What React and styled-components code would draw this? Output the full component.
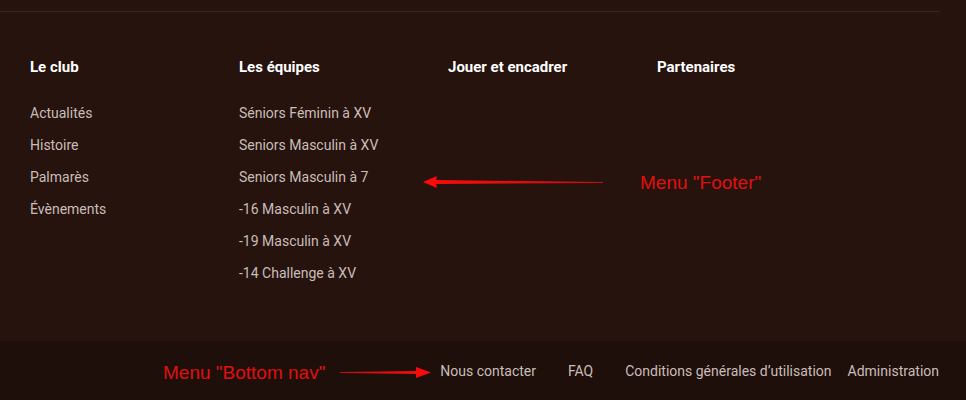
import React from 'react'
import styled, { createGlobalStyle } from 'styled-components'

const GlobalStyle = createGlobalStyle`
    html, body {
        margin: 0;
        padding: 0;
        background: #26130e;
    }
    body {
        font-family: Roboto, "Liberation Sans", sans-serif;
    }
`

const Page = styled.div`
    position: relative;
    width: 966px;
    height: 400px;
    background: #26130e;
    overflow: hidden;
`

const TopRule = styled.div`
    margin-top: 11px;
    width: 940px;
    height: 1px;
    background: #3a2520;
`

const Columns = styled.div`
    display: grid;
    grid-template-columns: repeat(4, 209px);
    padding: 47px 0 0 30px;
    height: 329px;
    box-sizing: border-box;
`

const Column = styled.div`
    display: flex;
    flex-direction: column;
`

const Heading = styled.h3`
    margin: 0 0 30px;
    font-size: 15px;
    line-height: 16px;
    font-weight: 700;
    color: #ffffff;
`

const LinkList = styled.ul`
    list-style: none;
    margin: 0;
    padding: 0;
    display: flex;
    flex-direction: column;
    gap: 16px;
`

const LinkItem = styled.li`
    font-size: 14px;
    line-height: 16px;
    color: #c9bdb9;
`

const BottomNav = styled.nav`
    height: 59px;
    background: #1f0f0b;
    display: flex;
    justify-content: flex-end;
    align-items: center;
    padding-right: 27px;
    gap: 32px;
    box-sizing: border-box;
`

const BottomLink = styled.span`
    font-size: 14px;
    color: #c9bdb9;
    margin-right: ${p => p.$tight ? '-16px' : '0'};
`

const Note = styled.div`
    position: absolute;
    left: ${p => p.$x}px;
    top: ${p => p.$y}px;
    font-family: "Liberation Sans", Arial, sans-serif;
    font-size: 19px;
    color: #e0100f;
    white-space: nowrap;
`

const Arrow = styled.svg`
    position: absolute;
    left: ${p => p.$x}px;
    top: ${p => p.$y}px;
`

const columns = [
    { title: 'Le club', links: ['Actualités', 'Histoire', 'Palmarès', 'Évènements'] },
    {
        title: 'Les équipes',
        links: [
            'Séniors Féminin à XV',
            'Seniors Masculin à XV',
            'Seniors Masculin à 7',
            '-16 Masculin à XV',
            '-19 Masculin à XV',
            '-14 Challenge à XV',
        ],
    },
    { title: 'Jouer et encadrer', links: [] },
    { title: 'Partenaires', links: [] },
]

function App() {
    return (
        <Page>
            <GlobalStyle />
            <TopRule />
            <Columns>
                {columns.map(col => (
                    <Column key={col.title}>
                        <Heading>{col.title}</Heading>
                        <LinkList>
                            {col.links.map(l => <LinkItem key={l}>{l}</LinkItem>)}
                        </LinkList>
                    </Column>
                ))}
            </Columns>
            <BottomNav>
                <BottomLink>Nous contacter</BottomLink>
                <BottomLink>FAQ</BottomLink>
                <BottomLink $tight>Conditions générales d’utilisation</BottomLink>
                <BottomLink>Administration</BottomLink>
            </BottomNav>

            {/* annotations */}
            <Arrow $x={420} $y={174} width="186" height="16" viewBox="0 0 186 16">
                <defs>
                    <linearGradient id="fadeL" x1="0" x2="1" y1="0" y2="0">
                        <stop offset="0" stopColor="#ff0a0a" />
                        <stop offset="1" stopColor="#c01010" />
                    </linearGradient>
                </defs>
                <polygon points="3,8 17,2 16,6 183,8 183,9 16,10 17,14" fill="url(#fadeL)" />
            </Arrow>
            <Note $x={640} $y={172}>Menu "Footer"</Note>

            <Note $x={163} $y={362}>Menu "Bottom nav"</Note>
            <Arrow $x={338} $y={364} width="96" height="16" viewBox="0 0 96 16">
                <defs>
                    <linearGradient id="fadeR" x1="0" x2="1" y1="0" y2="0">
                        <stop offset="0" stopColor="#c01010" />
                        <stop offset="1" stopColor="#ff0a0a" />
                    </linearGradient>
                </defs>
                <polygon points="2,8 2,9 78,10 78,14 93,8.5 78,3 78,7" fill="url(#fadeR)" />
            </Arrow>
        </Page>
    )
}

export default App
